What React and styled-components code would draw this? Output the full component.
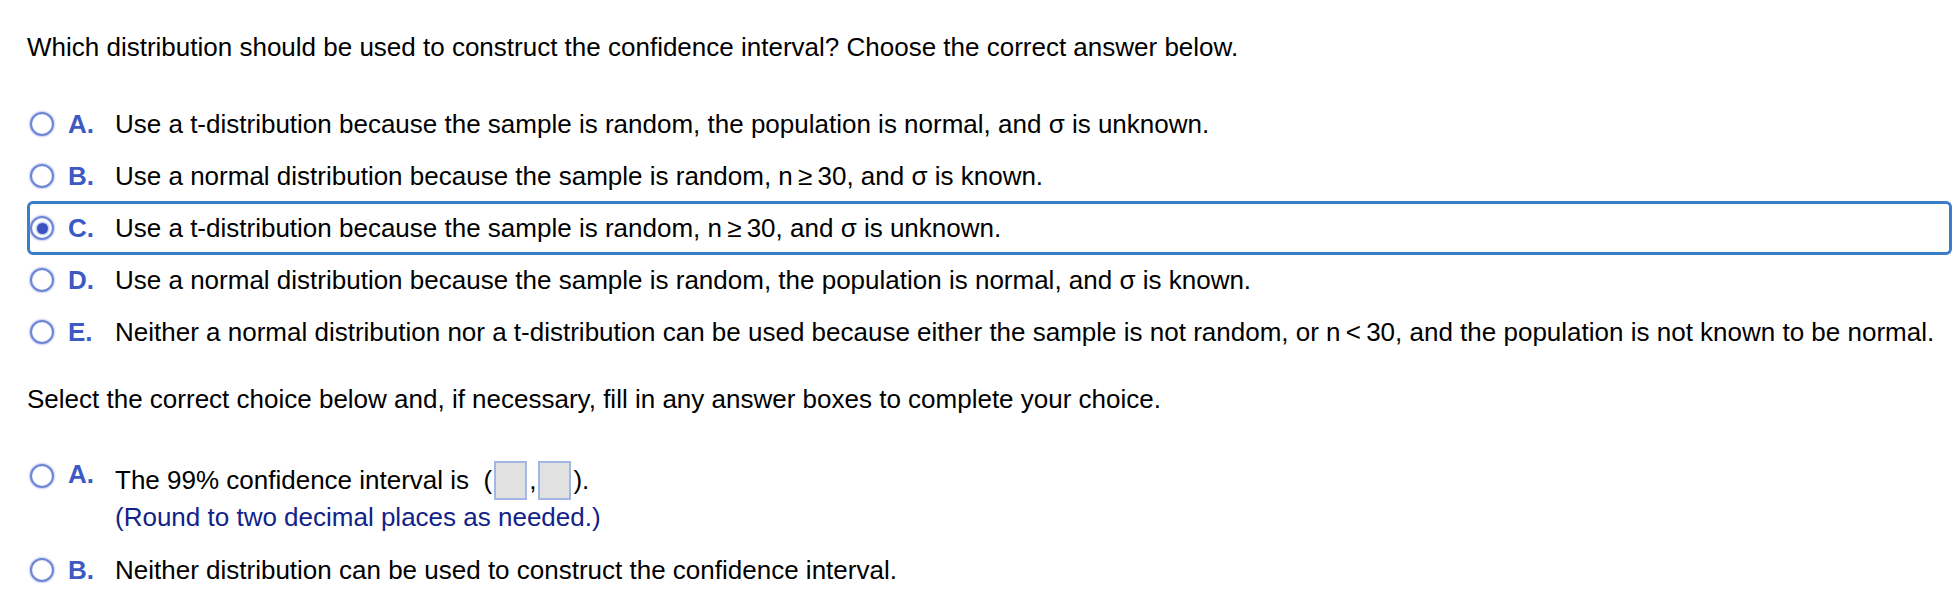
import React from "react";
import styled, { createGlobalStyle } from "styled-components";

const Global = createGlobalStyle`
  html, body { margin: 0; padding: 0; background: #fff; }
  body { font-family: "Liberation Sans", Arial, Helvetica, sans-serif; color: #000; }
`;

const Page = styled.div`
  padding: 32px 8px 0 27px;
  font-size: 26px;
`;

const Prompt = styled.div`
  line-height: 30px;
  height: 30px;
  margin-top: ${(p) => p.$top || 0}px;
  white-space: nowrap;
`;

const Options = styled.div`
  display: flex;
  flex-direction: column;
  margin-top: ${(p) => p.$top || 0}px;
  width: 1925px;
`;

const Row = styled.div`
  display: flex;
  align-items: ${(p) => (p.$top ? "flex-start" : "center")};
  box-sizing: border-box;
  min-height: ${(p) => (p.$selected ? 54 : 52)}px;
  margin: ${(p) => (p.$selected ? "-1px 0" : "0")};
  border: 3px solid ${(p) => (p.$selected ? "#3a7dc9" : "transparent")};
  border-radius: 6px;
  padding-top: ${(p) => (p.$top ? 4 : 0)}px;
  padding-bottom: ${(p) => (p.$top ? 9 : 0)}px;
`;

const Radio = styled.span`
  flex: none;
  box-sizing: border-box;
  width: 24px;
  height: 24px;
  border-radius: 50%;
  border: 2.5px solid #6e86d6;
  box-shadow: 0 0 1.5px 1px rgba(130, 150, 225, 0.45), inset 0 0 1px rgba(90, 110, 200, 0.5);
  background: #fff;
  margin-right: 14px;
  display: flex;
  align-items: center;
  justify-content: center;
  margin-top: ${(p) => (p.$top ? 6 : 0)}px;
  &::after {
    content: "";
    display: ${(p) => (p.$checked ? "block" : "none")};
    width: 11px;
    height: 11px;
    border-radius: 50%;
    background: #3a52c2;
    box-shadow: 0 0 0 1.5px #c9d2f2;
  }
`;

const Letter = styled.span`
  flex: none;
  width: 47px;
  font-weight: bold;
  color: #3d59c3;
  line-height: 30px;
  margin-top: ${(p) => (p.$top ? 1 : 0)}px;
`;

const Label = styled.span`
  line-height: 30px;
  white-space: nowrap;
`;

const Stack = styled.div`
  display: flex;
  flex-direction: column;
`;

const Line = styled.div`
  display: flex;
  align-items: center;
  height: 44px;
  white-space: nowrap;
`;

const Hint = styled.div`
  color: #11228a;
  line-height: 30px;
  white-space: nowrap;
`;

const Box = styled.span`
  display: inline-block;
  box-sizing: border-box;
  width: 33px;
  height: 39px;
  background: #e1e1e1;
  border: 2px solid #a3b7e6;
  margin: 0 2px;
`;

const Punct = styled.span`
  white-space: pre;
`;

const T = "\u2009";

const first = [
  { l: "A.", t: "Use a t-distribution because the sample is random, the population is normal, and σ is unknown." },
  { l: "B.", t: `Use a normal distribution because the sample is random, n${T}≥${T}30, and σ is known.` },
  { l: "C.", t: `Use a t-distribution because the sample is random, n${T}≥${T}30, and σ is unknown.`, sel: true },
  { l: "D.", t: "Use a normal distribution because the sample is random, the population is normal, and σ is known." },
  {
    l: "E.",
    t: `Neither a normal distribution nor a t-distribution can be used because either the sample is not random, or n${T}<${T}30, and the population is not known to be normal.`,
  },
];

export default function App() {
  return (
    <>
      <Global />
      <Page>
        <Prompt>Which distribution should be used to construct the confidence interval? Choose the correct answer below.</Prompt>
        <Options $top={36}>
          {first.map((o) => (
            <Row key={o.l} $selected={o.sel}>
              <Radio $checked={o.sel} />
              <Letter>{o.l}</Letter>
              <Label>{o.t}</Label>
            </Row>
          ))}
        </Options>
        <Prompt $top={26}>Select the correct choice below and, if necessary, fill in any answer boxes to complete your choice.</Prompt>
        <Options $top={37}>
          <Row $top>
            <Radio $top />
            <Letter $top>A.</Letter>
            <Stack>
              <Line>
                <Punct>The 99% confidence interval is  (</Punct>
                <Box />
                <Punct>,</Punct>
                <Box />
                <Punct>).</Punct>
              </Line>
              <Hint>(Round to two decimal places as needed.)</Hint>
            </Stack>
          </Row>
          <Row>
            <Radio />
            <Letter>B.</Letter>
            <Label>Neither distribution can be used to construct the confidence interval.</Label>
          </Row>
        </Options>
      </Page>
    </>
  );
}
